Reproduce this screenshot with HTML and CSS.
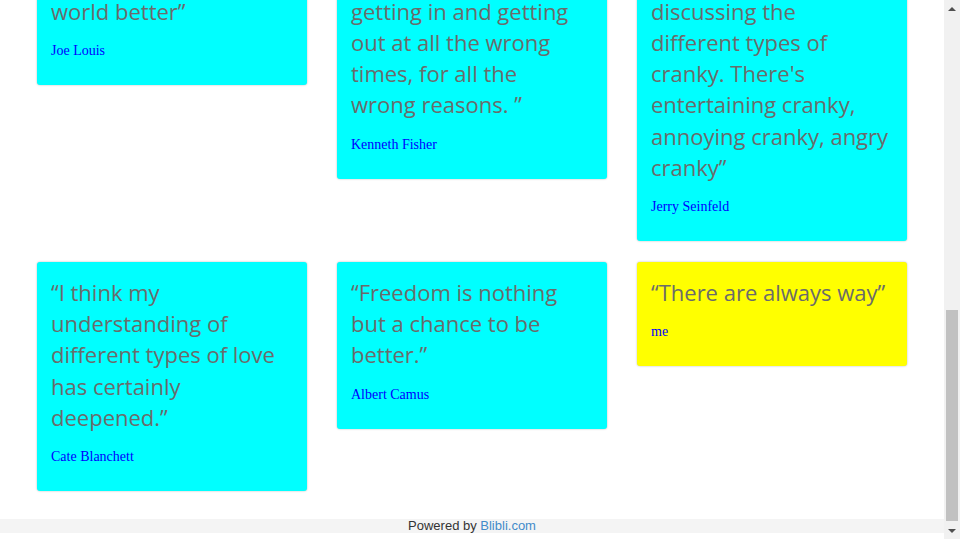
FILE: index.html
```html
<!DOCTYPE html>
<html lang="en">
<head>
<meta charset="utf-8">
<title>Quotes</title>
<link rel="stylesheet" href="styles.css">
</head>
<body>
<div class="window">
  <div class="viewport">
    <main class="board">
      <article class="card cyan">
        <p class="quote">“I hope people remember that I tried to make the whole world better”</p>
        <p class="author">Joe Louis</p>
      </article>
      <article class="card cyan">
        <p class="quote">“Most investors spend their entire lives nervously and wildly getting in and getting out at all the wrong times, for all the<br>wrong reasons. ”</p>
        <p class="author">Kenneth Fisher</p>
      </article>
      <article class="card cyan">
        <p class="quote">“I've been thinking constantly about crankiness, so we're discussing the<br>different types of cranky. There's entertaining cranky, annoying cranky, angry cranky”</p>
        <p class="author">Jerry Seinfeld</p>
      </article>

      <article class="card cyan">
        <p class="quote">“I think my understanding of different types of love has certainly deepened.”</p>
        <p class="author">Cate Blanchett</p>
      </article>
      <article class="card cyan">
        <p class="quote">“Freedom is nothing but a chance to be better.”</p>
        <p class="author">Albert Camus</p>
      </article>
      <article class="card yellow">
        <p class="quote">“There are always way”</p>
        <p class="author">me</p>
      </article>
    </main>
    <footer class="footer">Powered by <a class="footer-link" href="#">Blibli.com</a></footer>
  </div>
  <div class="scrollbar" aria-hidden="true">
    <div class="sb-button"><span class="arrow-up"></span></div>
    <div class="sb-track"><div class="sb-thumb"></div></div>
    <div class="sb-button"><span class="arrow-down"></span></div>
  </div>
</div>
</body>
</html>
```

FILE: styles.css
```css
html,
body {
  margin: 0;
  height: 100%;
  overflow: hidden;
}

body {
  background: #fff;
  font-family: "Liberation Serif", "Times New Roman", serif;
}

.window {
  display: flex;
  height: 100vh;
}

.viewport {
  flex: 1;
  min-width: 0;
  height: 100%;
  overflow: hidden;
  display: flex;
  flex-direction: column;
  justify-content: flex-end;
  padding-bottom: 6px;
  box-sizing: border-box;
}

.board {
  flex-shrink: 0;
  width: 870px;
  margin: 0 auto;
  display: grid;
  grid-template-columns: repeat(3, 270px);
  column-gap: 30px;
  row-gap: 21px;
  align-items: start;
}

.card {
  border-radius: 3px;
  padding: 15px 14px 24px;
  box-shadow: 0 0 2px rgba(0, 0, 0, 0.3);
}

.cyan {
  background: #00ffff;
}

.yellow {
  background: #ffff00;
}

.quote {
  margin: 0;
  font-family: "Comic Sans MS", "Open Sans", sans-serif;
  font-size: 22px;
  line-height: 31.2px;
  color: #6b6b6b;
}

.author {
  margin: 14px 0 0;
  font-size: 14px;
  line-height: 20px;
  color: #0000ff;
}

.footer {
  flex-shrink: 0;
  margin-top: 28px;
  height: 14px;
  background: #f4f4f4;
  text-align: center;
  font-family: "Liberation Sans", Arial, sans-serif;
  font-size: 13px;
  line-height: 14px;
  color: #333;
}

.footer-link {
  color: #428bca;
  text-decoration: none;
}

.scrollbar {
  width: 16px;
  flex-shrink: 0;
  background: #f1f1f1;
  display: flex;
  flex-direction: column;
}

.sb-button {
  height: 17px;
  display: flex;
  align-items: center;
  justify-content: center;
}

.arrow-up {
  width: 0;
  height: 0;
  border-left: 4px solid transparent;
  border-right: 4px solid transparent;
  border-bottom: 4px solid #505050;
}

.arrow-down {
  width: 0;
  height: 0;
  border-left: 4px solid transparent;
  border-right: 4px solid transparent;
  border-top: 4px solid #505050;
}

.sb-track {
  flex: 1;
  display: flex;
  flex-direction: column;
  justify-content: flex-end;
  padding: 0 2px 1px;
}

.sb-thumb {
  height: 211px;
  background: #c1c1c1;
}
```
